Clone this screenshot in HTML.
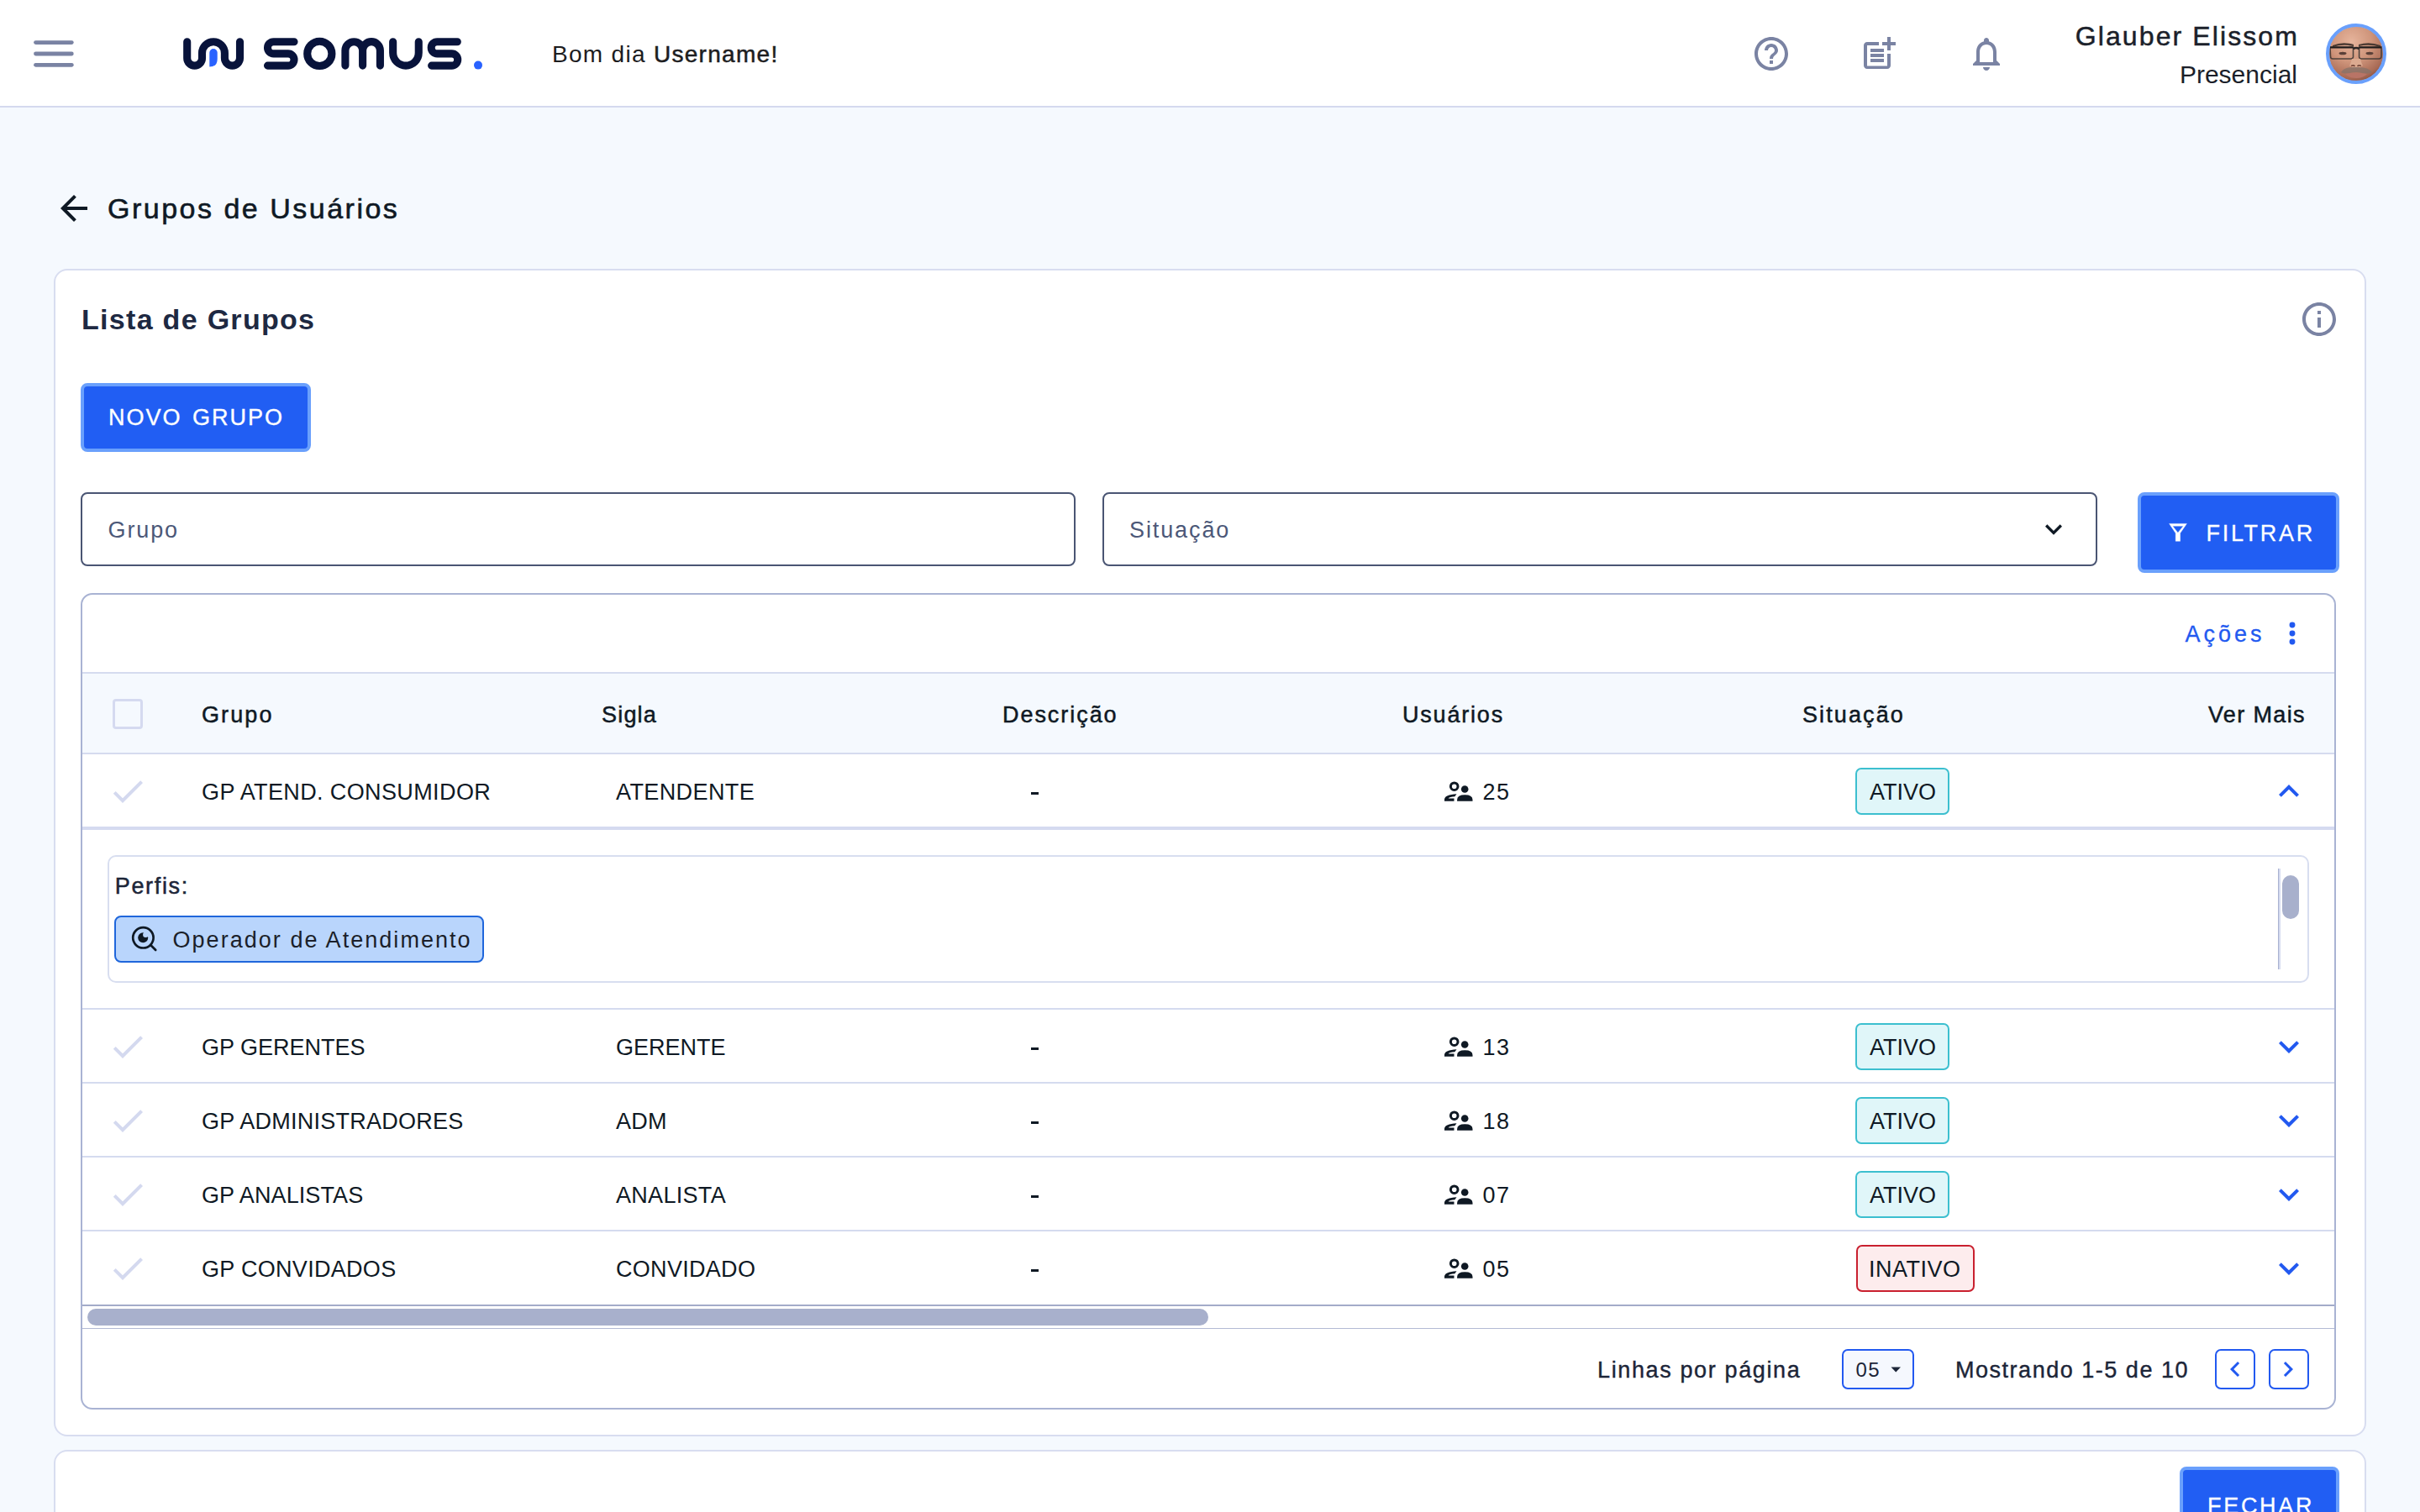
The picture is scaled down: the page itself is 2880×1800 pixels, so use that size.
<!DOCTYPE html>
<html><head><meta charset="utf-8">
<style>
*{box-sizing:border-box;margin:0;padding:0}
html,body{width:2880px;height:1800px;overflow:hidden;background:#f5f9fe;font-family:"Liberation Sans",sans-serif;color:#0f1924}
.a{position:absolute}
.t{position:absolute;line-height:1;white-space:nowrap}
svg{position:absolute;overflow:visible}
#hdr{left:0;top:0;width:2880px;height:128px;background:#fff;border-bottom:2px solid #d4d9ee}
.card{background:#fff;border:2px solid #d8ddf0;border-radius:16px}
.btn{background:#215ef3;border:4px solid #6aa0fc;border-radius:8px}
.inp{background:#fff;border:2px solid #4a5573;border-radius:8px}
.ph{color:#4c5878;font-size:28px;letter-spacing:1.3px}
.th{font-size:28px;color:#0f1924;letter-spacing:1.2px}
.td{font-size:28px;color:#0f1924}
.sep{position:absolute;left:98px;width:2680px;height:2px;background:#d5dbef}
.badge{position:absolute;border-radius:7px;border:2px solid #3cbfcf;background:#e0f6f9}
.bad{border-color:#c9202f;background:#fdeced}
</style></head><body>

<!-- HEADER -->
<div id="hdr" class="a"></div>
<svg style="left:0;top:0" width="10" height="10">
  <g stroke="#7a83a3" stroke-width="4.8" stroke-linecap="round">
    <line x1="42.5" y1="50.6" x2="85.3" y2="50.6"/>
    <line x1="42.5" y1="64" x2="85.3" y2="64"/>
    <line x1="42.5" y1="77.3" x2="85.3" y2="77.3"/>
  </g>
</svg>
<!-- logo -->
<svg style="left:0;top:0" width="10" height="10">
  <g fill="none" stroke="#08133b" stroke-width="9.1" stroke-linecap="round">
    <path d="M222.7,49.7 V69.2 A8.9,8.9 0 0 0 240.5,69.2 V63.15 A13.45,13.45 0 0 1 267.4,63.15 V69.05 A9.05,9.05 0 0 0 285.5,69.05 V49.7"/>
    <path d="M350,49.7 H325.6 A7.1,7.1 0 0 0 325.6,63.9 H342.9 A7.1,7.1 0 0 1 342.9,78.1 H318.5"/>
    <circle cx="380.3" cy="63.9" r="14.6"/>
    <path d="M410.9,78.1 V60.05 A10.35,10.35 0 0 1 431.6,60.05 V78.1 M431.6,60.05 A10.4,10.4 0 0 1 452.4,60.05 V78.1"/>
    <path d="M467.65,49.7 V62.8 A15.3,15.3 0 0 0 498.25,62.8 V49.7"/>
    <path d="M544.3,49.7 H520.3 A7.1,7.1 0 0 0 520.3,63.9 H537.6 A7.1,7.1 0 0 1 537.6,78.1 H513.6"/>
  </g>
  <path fill="#2962ff" d="M249.3,79.6 V62.8 A4.7,4.7 0 0 1 258.7,62.8 V70 Q258.7,79.6 249.3,79.6 Z"/>
  <circle fill="#2962ff" cx="569" cy="77.6" r="5"/>
</svg>
<div class="t" style="left:657px;top:51px;font-size:28px;letter-spacing:1.3px;color:#1d1d1f">Bom dia <span style="-webkit-text-stroke:0.5px #1d1d1f">Username!</span></div>

<!-- header icons -->
<svg style="left:2084px;top:40px" width="48" height="48" viewBox="0 0 24 24"><path fill="#7a83a3" d="M11 18h2v-2h-2v2zm1-16C6.48 2 2 6.48 2 12s4.48 10 10 10 10-4.48 10-10S17.52 2 12 2zm0 18c-4.41 0-8-3.59-8-8s3.59-8 8-8 8 3.59 8 8-3.59 8-8 8zm0-14c-2.21 0-4 1.79-4 4h2c0-1.1.9-2 2-2s2 .9 2 2c0 2-3 1.75-3 5h2c0-2.25 3-2.5 3-5 0-2.21-1.79-4-4-4z"/></svg>
<svg style="left:2212px;top:40px" width="48" height="48" viewBox="0 0 24 24"><path fill="#7a83a3" d="M17 19.22H5V7h7V5H5c-1.1 0-2 .9-2 2v12c0 1.1.9 2 2 2h12c1.1 0 2-.9 2-2v-7h-2v7.22zM19 2h-2v3h-3c.01.01 0 2 0 2h3v2.99c.01.01 2 0 2 0V7h3V5h-3V2zM7 9h8v2H7zM7 12v2h8v-2h-3zM7 15h8v2H7z"/></svg>
<svg style="left:2340px;top:40px" width="48" height="48" viewBox="0 0 24 24"><path fill="#7a83a3" d="M12 22c1.1 0 2-.9 2-2h-4c0 1.1.89 2 2 2zm6-6v-5c0-3.07-1.64-5.64-4.5-6.32V4c0-.83-.67-1.5-1.5-1.5s-1.5.67-1.5 1.5v.68C7.63 5.36 6 7.92 6 11v5l-2 2v1h16v-1l-2-2zm-2 1H8v-6c0-2.48 1.51-4.5 4-4.5s4 2.02 4 4.5v6z"/></svg>
<div class="t" style="right:144px;top:27px;font-size:32px;letter-spacing:2.1px;color:#1b1f2a;-webkit-text-stroke:0.5px #1b1f2a">Glauber Elissom</div>
<div class="t" style="right:146px;top:74px;font-size:30px;color:#1b1f2a">Presencial</div>
<!-- avatar -->
<svg style="left:2768px;top:28px" width="72" height="72" viewBox="0 0 72 72">
  <defs><clipPath id="av"><circle cx="36" cy="36" r="32.5"/></clipPath>
  <radialGradient id="sk" cx="42%" cy="30%" r="75%"><stop offset="0" stop-color="#e6b49c"/><stop offset="0.45" stop-color="#cf957b"/><stop offset="0.8" stop-color="#a86a55"/><stop offset="1" stop-color="#6e4032"/></radialGradient></defs>
  <g clip-path="url(#av)">
    <rect x="0" y="0" width="72" height="72" fill="url(#sk)"/>
    <path d="M8,26 Q20,21 33,25 L33,27 Q20,24 8,28Z M39,25 Q52,21 65,26 L65,28 Q52,24 39,27Z" fill="#4b3a32"/>
    <path d="M5,28 H32.5 V40 Q32,42 30,42 H8 Q5.5,42 5.5,39Z M39.6,28 H66 V39 Q66,42 63,42 H42 Q40,42 39.6,40Z" fill="none" stroke="#3a3431" stroke-width="1.6" opacity="0.85"/>
    <path d="M5,28.5 H32.5 M39.6,28.5 H66" stroke="#1f1b1a" stroke-width="2.2"/>
    <path d="M32.5,30 Q36,28 39.6,30" stroke="#2b2624" stroke-width="2.6" fill="none"/>
    <ellipse cx="20" cy="35.5" rx="4.5" ry="1.8" fill="#5a4038"/>
    <ellipse cx="52" cy="35.5" rx="4.5" ry="1.8" fill="#5a4038"/>
    <path d="M31,42 Q29,49 28,50 Q31,53 36,52.5 Q41,53 44,50 Q43,49 41,42Z" fill="#dcaa90"/>
    <path d="M30,50.5 Q33,49 34.5,51 M37.5,51 Q39,49 42,50.5" stroke="#7a4a3c" stroke-width="1.6" fill="none"/>
    <path d="M18,58 Q22,51 36,52 Q50,51 55,58 Q52,60 46,59.5 Q36,56.5 26,59.5 Q21,60 18,58Z" fill="#857168" opacity="0.75"/>
    <path d="M23,60 Q36,57 49,60 Q44,65 36,65 Q28,65 23,60Z" fill="#b97466"/>
    <path d="M22,65 Q36,70 50,65 L52,72 H20Z" fill="#a86d5c"/>
  </g>
  <circle cx="36" cy="36" r="34" fill="none" stroke="#6aa0fc" stroke-width="4"/>
</svg>


<!-- PAGE TITLE -->
<svg style="left:64px;top:224px" width="48" height="48" viewBox="0 0 24 24"><path fill="#0f1924" d="M20 11H7.83l5.59-5.59L12 4l-8 8 8 8 1.41-1.41L7.83 13H20v-2z"/></svg>
<div class="t" style="left:128.0px;top:230.9px;font-size:34px;letter-spacing:2.5px;color:#0f1924;-webkit-text-stroke:0.6px #0f1924;">Grupos de Usuários</div>
<div class="a card" style="left:64px;top:320px;width:2752px;height:1390px"></div>
<div class="t" style="left:97.0px;top:362.7px;font-size:34px;letter-spacing:1.3px;color:#1e2942;font-weight:700;">Lista de Grupos</div>
<svg style="left:2736px;top:356px" width="48" height="48" viewBox="0 0 24 24"><path fill="#7a83a3" d="M11 7h2v2h-2zm0 4h2v6h-2zm1-9C6.48 2 2 6.48 2 12s4.48 10 10 10 10-4.48 10-10S17.52 2 12 2zm0 18c-4.41 0-8-3.59-8-8s3.59-8 8-8 8 3.59 8 8-3.59 8-8 8z"/></svg>
<div class="a btn" style="left:96px;top:456px;width:274px;height:82px"></div>
<div class="t" style="left:129.0px;top:483.8px;font-size:27px;letter-spacing:2.0px;color:#fff;-webkit-text-stroke:0.35px #fff;word-spacing:3px;">NOVO GRUPO</div>
<div class="a inp" style="left:96px;top:586px;width:1184px;height:88px"></div>
<div class="t" style="left:128.5px;top:618.0px;font-size:27px;letter-spacing:1.9px;color:#4c5878;">Grupo</div>
<div class="a inp" style="left:1312px;top:586px;width:1184px;height:88px"></div>
<div class="t" style="left:1344.0px;top:618.0px;font-size:27px;letter-spacing:1.9px;color:#4c5878;">Situação</div>
<svg style="left:2424px;top:610px" width="40" height="40" viewBox="0 0 24 24"><path fill="#0f1924" d="M16.59 8.59L12 13.17 7.41 8.59 6 10l6 6 6-6z"/></svg>
<div class="a btn" style="left:2544px;top:586px;width:240px;height:96px"></div>
<svg style="left:0;top:0" width="10" height="10"><path fill="#fff" fill-rule="evenodd" stroke="#fff" stroke-width="0.4" stroke-linejoin="round" d="M2581.6,623.4 H2602.4 L2594.6,634.8 V644.3 H2589.2 V634.8 Z M2585.6,626.2 H2598.3 L2591.9,634.2 Z"/></svg>
<div class="t" style="left:2625.5px;top:622.1px;font-size:27px;letter-spacing:2.7px;color:#fff;-webkit-text-stroke:0.3px #fff;">FILTRAR</div>
<div class="a" style="left:96px;top:706px;width:2684px;height:972px;border:2px solid #a9b3d3;border-radius:14px;background:#fff"></div>
<div class="t" style="left:2600.5px;top:742.1px;font-size:27px;letter-spacing:4.0px;color:#2259f0;-webkit-text-stroke:0.3px #2259f0;">Ações</div>
<svg style="left:0;top:0" width="10" height="10"><g fill="#2259f0"><circle cx="2728" cy="744" r="3.45"/><circle cx="2728" cy="754" r="3.45"/><circle cx="2728" cy="764" r="3.45"/></g></svg>
<div class="a" style="left:98px;top:800px;width:2680px;height:98px;background:#f5f9fe;border-top:2px solid #d5dbef;border-bottom:2px solid #d5dbef"></div>
<div class="a" style="left:134px;top:832px;width:36px;height:36px;border:3.5px solid #d5daf0;border-radius:4px"></div>
<div class="t" style="left:240.0px;top:837.8px;font-size:27px;letter-spacing:2.1px;color:#0f1924;-webkit-text-stroke:0.5px #0f1924;">Grupo</div>
<div class="t" style="left:716.0px;top:837.8px;font-size:27px;letter-spacing:1.2px;color:#0f1924;-webkit-text-stroke:0.5px #0f1924;">Sigla</div>
<div class="t" style="left:1193.0px;top:837.8px;font-size:27px;letter-spacing:1.95px;color:#0f1924;-webkit-text-stroke:0.5px #0f1924;">Descrição</div>
<div class="t" style="left:1669.0px;top:837.8px;font-size:27px;letter-spacing:1.8px;color:#0f1924;-webkit-text-stroke:0.5px #0f1924;">Usuários</div>
<div class="t" style="left:2145.0px;top:837.8px;font-size:27px;letter-spacing:2.1px;color:#0f1924;-webkit-text-stroke:0.5px #0f1924;">Situação</div>
<div class="t" style="left:2628.0px;top:837.8px;font-size:27px;letter-spacing:1.35px;color:#0f1924;-webkit-text-stroke:0.5px #0f1924;">Ver Mais</div>
<svg style="left:128px;top:918px" width="48" height="48" viewBox="0 0 24 24"><path fill="#d4d9ef" d="M9 16.17L4.83 12l-1.42 1.41L9 19 21 7l-1.41-1.41z"/></svg>
<div class="t" style="left:240.0px;top:930.1px;font-size:27px;letter-spacing:0.38px;color:#0f1924;">GP ATEND. CONSUMIDOR</div>
<div class="t" style="left:733.0px;top:930.1px;font-size:27px;letter-spacing:0.4px;color:#0f1924;">ATENDENTE</div>
<div class="a" style="left:1226.5px;top:943.4px;width:9.3px;height:2.6px;background:#0f1924"></div>
<svg style="left:1719px;top:930px" width="34" height="24" fill="#0f1924"><path d="M0,23.7 V21.5 Q0.5,16 14.5,15.3 L12.3,18.3 Q6,18.6 4.7,20.5 H11.5 V23.7 Z"/><circle cx="11.7" cy="6.2" r="4.3" fill="none" stroke="#0f1924" stroke-width="3"/><circle cx="24.2" cy="9.5" r="4.3"/><path d="M15.1,23.7 V22 Q15.1,16.2 24.3,16.2 Q33.5,16.2 33.5,22 V23.7 Z"/></svg>
<div class="t" style="left:1764.5px;top:930.1px;font-size:27px;letter-spacing:1.6px;color:#0f1924;">25</div>
<div class="badge" style="left:2208px;top:914px;width:112px;height:56px"></div>
<div class="t" style="left:2225.0px;top:930.1px;font-size:27px;letter-spacing:0px;color:#0f1924;">ATIVO</div>
<svg style="left:2700px;top:918px" width="48" height="48" viewBox="0 0 24 24"><path fill="#2259f0" d="M12 8l-6 6 1.41 1.41L12 10.83l4.59 4.58L18 14z"/></svg>
<svg style="left:128px;top:1222px" width="48" height="48" viewBox="0 0 24 24"><path fill="#d4d9ef" d="M9 16.17L4.83 12l-1.42 1.41L9 19 21 7l-1.41-1.41z"/></svg>
<div class="t" style="left:240.0px;top:1234.1px;font-size:27px;letter-spacing:0.0px;color:#0f1924;">GP GERENTES</div>
<div class="t" style="left:733.0px;top:1234.1px;font-size:27px;letter-spacing:0.0px;color:#0f1924;">GERENTE</div>
<div class="a" style="left:1226.5px;top:1247.4px;width:9.3px;height:2.6px;background:#0f1924"></div>
<svg style="left:1719px;top:1234px" width="34" height="24" fill="#0f1924"><path d="M0,23.7 V21.5 Q0.5,16 14.5,15.3 L12.3,18.3 Q6,18.6 4.7,20.5 H11.5 V23.7 Z"/><circle cx="11.7" cy="6.2" r="4.3" fill="none" stroke="#0f1924" stroke-width="3"/><circle cx="24.2" cy="9.5" r="4.3"/><path d="M15.1,23.7 V22 Q15.1,16.2 24.3,16.2 Q33.5,16.2 33.5,22 V23.7 Z"/></svg>
<div class="t" style="left:1764.5px;top:1234.1px;font-size:27px;letter-spacing:1.6px;color:#0f1924;">13</div>
<div class="badge" style="left:2208px;top:1218px;width:112px;height:56px"></div>
<div class="t" style="left:2225.0px;top:1234.1px;font-size:27px;letter-spacing:0px;color:#0f1924;">ATIVO</div>
<svg style="left:2700px;top:1222px" width="48" height="48" viewBox="0 0 24 24"><path fill="#2259f0" d="M16.59 8.59L12 13.17 7.41 8.59 6 10l6 6 6-6z"/></svg>
<svg style="left:128px;top:1310px" width="48" height="48" viewBox="0 0 24 24"><path fill="#d4d9ef" d="M9 16.17L4.83 12l-1.42 1.41L9 19 21 7l-1.41-1.41z"/></svg>
<div class="t" style="left:240.0px;top:1322.1px;font-size:27px;letter-spacing:0.24px;color:#0f1924;">GP ADMINISTRADORES</div>
<div class="t" style="left:733.0px;top:1322.1px;font-size:27px;letter-spacing:0.3px;color:#0f1924;">ADM</div>
<div class="a" style="left:1226.5px;top:1335.4px;width:9.3px;height:2.6px;background:#0f1924"></div>
<svg style="left:1719px;top:1322px" width="34" height="24" fill="#0f1924"><path d="M0,23.7 V21.5 Q0.5,16 14.5,15.3 L12.3,18.3 Q6,18.6 4.7,20.5 H11.5 V23.7 Z"/><circle cx="11.7" cy="6.2" r="4.3" fill="none" stroke="#0f1924" stroke-width="3"/><circle cx="24.2" cy="9.5" r="4.3"/><path d="M15.1,23.7 V22 Q15.1,16.2 24.3,16.2 Q33.5,16.2 33.5,22 V23.7 Z"/></svg>
<div class="t" style="left:1764.5px;top:1322.1px;font-size:27px;letter-spacing:1.6px;color:#0f1924;">18</div>
<div class="badge" style="left:2208px;top:1306px;width:112px;height:56px"></div>
<div class="t" style="left:2225.0px;top:1322.1px;font-size:27px;letter-spacing:0px;color:#0f1924;">ATIVO</div>
<svg style="left:2700px;top:1310px" width="48" height="48" viewBox="0 0 24 24"><path fill="#2259f0" d="M16.59 8.59L12 13.17 7.41 8.59 6 10l6 6 6-6z"/></svg>
<svg style="left:128px;top:1398px" width="48" height="48" viewBox="0 0 24 24"><path fill="#d4d9ef" d="M9 16.17L4.83 12l-1.42 1.41L9 19 21 7l-1.41-1.41z"/></svg>
<div class="t" style="left:240.0px;top:1410.1px;font-size:27px;letter-spacing:0.1px;color:#0f1924;">GP ANALISTAS</div>
<div class="t" style="left:733.0px;top:1410.1px;font-size:27px;letter-spacing:0.3px;color:#0f1924;">ANALISTA</div>
<div class="a" style="left:1226.5px;top:1423.4px;width:9.3px;height:2.6px;background:#0f1924"></div>
<svg style="left:1719px;top:1410px" width="34" height="24" fill="#0f1924"><path d="M0,23.7 V21.5 Q0.5,16 14.5,15.3 L12.3,18.3 Q6,18.6 4.7,20.5 H11.5 V23.7 Z"/><circle cx="11.7" cy="6.2" r="4.3" fill="none" stroke="#0f1924" stroke-width="3"/><circle cx="24.2" cy="9.5" r="4.3"/><path d="M15.1,23.7 V22 Q15.1,16.2 24.3,16.2 Q33.5,16.2 33.5,22 V23.7 Z"/></svg>
<div class="t" style="left:1764.5px;top:1410.1px;font-size:27px;letter-spacing:1.6px;color:#0f1924;">07</div>
<div class="badge" style="left:2208px;top:1394px;width:112px;height:56px"></div>
<div class="t" style="left:2225.0px;top:1410.1px;font-size:27px;letter-spacing:0px;color:#0f1924;">ATIVO</div>
<svg style="left:2700px;top:1398px" width="48" height="48" viewBox="0 0 24 24"><path fill="#2259f0" d="M16.59 8.59L12 13.17 7.41 8.59 6 10l6 6 6-6z"/></svg>
<svg style="left:128px;top:1486px" width="48" height="48" viewBox="0 0 24 24"><path fill="#d4d9ef" d="M9 16.17L4.83 12l-1.42 1.41L9 19 21 7l-1.41-1.41z"/></svg>
<div class="t" style="left:240.0px;top:1498.1px;font-size:27px;letter-spacing:0.3px;color:#0f1924;">GP CONVIDADOS</div>
<div class="t" style="left:733.0px;top:1498.1px;font-size:27px;letter-spacing:0.3px;color:#0f1924;">CONVIDADO</div>
<div class="a" style="left:1226.5px;top:1511.4px;width:9.3px;height:2.6px;background:#0f1924"></div>
<svg style="left:1719px;top:1498px" width="34" height="24" fill="#0f1924"><path d="M0,23.7 V21.5 Q0.5,16 14.5,15.3 L12.3,18.3 Q6,18.6 4.7,20.5 H11.5 V23.7 Z"/><circle cx="11.7" cy="6.2" r="4.3" fill="none" stroke="#0f1924" stroke-width="3"/><circle cx="24.2" cy="9.5" r="4.3"/><path d="M15.1,23.7 V22 Q15.1,16.2 24.3,16.2 Q33.5,16.2 33.5,22 V23.7 Z"/></svg>
<div class="t" style="left:1764.5px;top:1498.1px;font-size:27px;letter-spacing:1.6px;color:#0f1924;">05</div>
<div class="badge bad" style="left:2208.5px;top:1482px;width:141px;height:56px"></div>
<div class="t" style="left:2224.0px;top:1498.1px;font-size:27px;letter-spacing:0.5px;color:#0f1924;">INATIVO</div>
<svg style="left:2700px;top:1486px" width="48" height="48" viewBox="0 0 24 24"><path fill="#2259f0" d="M16.59 8.59L12 13.17 7.41 8.59 6 10l6 6 6-6z"/></svg>
<div class="a" style="left:98px;top:984px;width:2680px;height:4px;background:#d5daf0"></div>
<div class="sep" style="top:1200px"></div>
<div class="sep" style="top:1288px"></div>
<div class="sep" style="top:1376px"></div>
<div class="sep" style="top:1464px"></div>
<div class="a" style="left:128px;top:1018px;width:2620px;height:152px;border:2px solid #d8def0;border-radius:10px"></div>
<div class="t" style="left:136.8px;top:1042.2px;font-size:27px;letter-spacing:1.65px;color:#1c2538;-webkit-text-stroke:0.5px #1c2538;">Perfis:</div>
<div class="a" style="left:136px;top:1090px;width:440px;height:56px;border:2px solid #1f66db;border-radius:8px;background:#b9d5fc"></div>
<svg style="left:151px;top:1097px" width="40" height="40" viewBox="0 0 40 40">
  <defs><mask id="bite"><rect x="0" y="0" width="40" height="40" fill="#fff"/><circle cx="22.4" cy="15.7" r="3.3" fill="#000"/></mask></defs>
  <circle cx="19.4" cy="19.3" r="12.2" fill="none" stroke="#0f1924" stroke-width="2.7"/>
  <path d="M28.2,28.1 L34.2,33.9" stroke="#0f1924" stroke-width="2.8" stroke-linecap="round"/>
  <circle cx="19.2" cy="19.2" r="6" fill="#0f1924" mask="url(#bite)"/>
</svg>
<div class="t" style="left:205.5px;top:1106.1px;font-size:27px;letter-spacing:2.04px;color:#1b1f2a;">Operador de Atendimento</div>
<div class="a" style="left:2711px;top:1034px;width:3px;height:120px;background:linear-gradient(90deg,#a9b1d0 50%,#d5dbef 50%)"></div>
<div class="a" style="left:2716px;top:1042px;width:20px;height:52px;border-radius:10px;background:#a8b0cc"></div>
<div class="a" style="left:98px;top:1553px;width:2680px;height:2px;background:#a3abc9"></div>
<div class="a" style="left:104px;top:1558px;width:1334px;height:20px;border-radius:10px;background:#a8b0cc"></div>
<div class="a" style="left:98px;top:1581px;width:2680px;height:1px;background:#b3bad4"></div>
<div class="t" style="left:1901.0px;top:1617.8px;font-size:27px;letter-spacing:1.63px;color:#1c2538;-webkit-text-stroke:0.4px #1c2538;">Linhas por página</div>
<div class="a" style="left:2192px;top:1606px;width:86px;height:48px;border:2px solid #2259f0;border-radius:7px;background:#f5f8fe"></div>
<div class="t" style="left:2208.5px;top:1619.2px;font-size:24px;letter-spacing:1.4px;color:#1c2538;">05</div>
<svg style="left:0;top:0" width="10" height="10"><path d="M2250.5,1627.5 H2262 L2256.25,1633.5 Z" fill="#1c2538"/></svg>
<div class="t" style="left:2327.0px;top:1617.8px;font-size:27px;letter-spacing:1.52px;color:#1c2538;-webkit-text-stroke:0.4px #1c2538;">Mostrando 1-5 de 10</div>
<div class="a" style="left:2636px;top:1606px;width:48px;height:48px;border:2px solid #2259f0;border-radius:7px"></div>
<div class="a" style="left:2700px;top:1606px;width:48px;height:48px;border:2px solid #2259f0;border-radius:7px"></div>
<svg style="left:2642px;top:1612px" width="36" height="36" viewBox="0 0 24 24"><path fill="#2259f0" d="M15.41 16.59L10.83 12l4.58-4.59L14 6l-6 6 6 6 1.41-1.41z"/></svg>
<svg style="left:2705px;top:1612px" width="36" height="36" viewBox="0 0 24 24"><path fill="#2259f0" d="M8.59 16.59L13.17 12 8.59 7.41 10 6l6 6-6 6-1.41-1.41z"/></svg>
<div class="a card" style="left:64px;top:1726px;width:2752px;height:200px"></div>
<div class="a btn" style="left:2594px;top:1746px;width:190px;height:96px"></div>
<div class="t" style="left:2627.0px;top:1780.0px;font-size:27px;letter-spacing:2.7px;color:#fff;-webkit-text-stroke:0.3px #fff;">FECHAR</div>

</body></html>
